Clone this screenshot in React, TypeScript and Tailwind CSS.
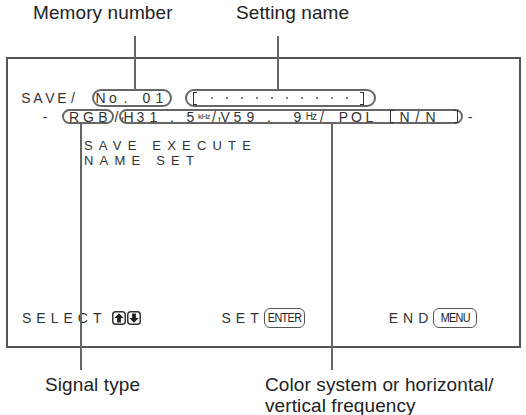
import React from 'react';

const Cell = ({ w, children }: { w: string; children?: React.ReactNode }) => (
    <span className={`${w} flex justify-center shrink-0`}>{children}</span>
);

const Gap = ({ w }: { w: string }) => <span className={`${w} shrink-0`} />;

const LBr = () => <span className="w-[4px] h-[13px] shrink-0 border-l border-y border-[#333]" />;
const RBr = () => <span className="w-[4px] h-[13px] shrink-0 border-r border-y border-[#333]" />;

const Dot = () => <span className="w-[2px] h-[2px] rounded-full bg-[#555]" />;

const ArrowKey = ({ down = false }: { down?: boolean }) => (
    <svg width="14" height="14" viewBox="0 0 14 14" className={down ? 'rotate-180' : ''}>
        <rect x="0.75" y="0.75" width="12.5" height="12.5" rx="3" fill="#fff" stroke="#333" strokeWidth="1.5" />
        <path d="M7 2.3 L11.6 7 H8.9 V11.6 H5.1 V7 H2.4 Z" fill="#222" />
    </svg>
);

const Key = ({ label, w }: { label: string; w: string }) => (
    <span className={`${w} h-[20px] shrink-0 flex items-center justify-center rounded-[6px] border border-[#555] tracking-normal`}>
        <span className="text-[12px] tracking-[-0.7px] scale-x-90 text-[#222]">{label}</span>
    </span>
);

const Pill = ({ className, children }: { className: string; children: React.ReactNode }) => (
    <div className={`${className} flex items-center shrink-0 rounded-full border-2 border-[#666]`}>{children}</div>
);

export default function App() {
    const dots = Array.from({ length: 10 });

    return (
        <div className="relative w-[526px] h-[415px] bg-white overflow-hidden font-['Liberation_Sans',Arial,sans-serif] text-[#2a2a2a]">
            {/* callout labels above */}
            <div className="h-[57px] flex pt-[2px] pl-[33px] text-[19px] leading-[21px] tracking-[0.1px] text-[#222]">
                <span className="w-[203px]">Memory number</span>
                <span>Setting name</span>
            </div>

            {/* monitor screen */}
            <div className="ml-[6px] w-[515px] h-[291px] border-2 border-[#555] flex flex-col pt-[30px] pb-[18px] text-[14px] text-[#333]">
                {/* row 1 */}
                <div className="h-[18px] flex items-center pl-[12px] leading-none">
                    <Cell w="w-[12px]">S</Cell>
                    <Cell w="w-[12px]">A</Cell>
                    <Cell w="w-[12px]">V</Cell>
                    <Cell w="w-[12px]">E</Cell>
                    <Cell w="w-[10px]">/</Cell>
                    <Gap w="w-[14px]" />
                    <Pill className="w-[80px] h-[18px]">
                        <Cell w="w-[13px]">N</Cell>
                        <Cell w="w-[12px]">o</Cell>
                        <Cell w="w-[13px]">.</Cell>
                        <Gap w="w-[8px]" />
                        <Cell w="w-[13px]">0</Cell>
                        <Cell w="w-[13px]">1</Cell>
                    </Pill>
                    <Gap w="w-[13px]" />
                    <Pill className="w-[191px] h-[18px]">
                        <Gap w="w-[6px]" />
                        <LBr />
                        <Gap w="w-[7px]" />
                        {dots.map((_, i) => (
                            <Cell key={i} w="w-[15px]">
                                <Dot />
                            </Cell>
                        ))}
                        <Gap w="w-[6px]" />
                        <RBr />
                    </Pill>
                </div>

                {/* row 2 */}
                <div className="mt-[2px] h-[15px] flex items-center pl-[34px] leading-none">
                    <Cell w="w-[6px]">-</Cell>
                    <Gap w="w-[14px]" />
                    <Pill className="w-[52px] h-[15px] pl-[3px]">
                        <Cell w="w-[14px]">R</Cell>
                        <Cell w="w-[15px]">G</Cell>
                        <Cell w="w-[14px]">B</Cell>
                    </Pill>
                    <Cell w="w-[5px]">/</Cell>
                    <Pill className="w-[344px] h-[15px]">
                        <Cell w="w-[13px]">
                            <span className="flex items-baseline">
                                <span className="text-[8px]">f</span>H
                            </span>
                        </Cell>
                        <Cell w="w-[13px]">3</Cell>
                        <Cell w="w-[13px]">1</Cell>
                        <Cell w="w-[24px]">.</Cell>
                        <Cell w="w-[13px]">5</Cell>
                        <Cell w="w-[14px]">
                            <span className="text-[8px] tracking-[-0.6px]">kHz</span>
                        </Cell>
                        <Cell w="w-[6px]">/</Cell>
                        <Cell w="w-[14px]">
                            <span className="flex items-baseline">
                                <span className="text-[8px]">f</span>V
                            </span>
                        </Cell>
                        <Cell w="w-[13px]">5</Cell>
                        <Cell w="w-[13px]">9</Cell>
                        <Cell w="w-[24px]">.</Cell>
                        <Gap w="w-[10px]" />
                        <Cell w="w-[13px]">9</Cell>
                        <Cell w="w-[14px]">
                            <span className="text-[10px] tracking-[-0.8px]">Hz</span>
                        </Cell>
                        <Cell w="w-[8px]">/</Cell>
                        <Gap w="w-[11px]" />
                        <Cell w="w-[13px]">P</Cell>
                        <Cell w="w-[13px]">O</Cell>
                        <Cell w="w-[13px]">L</Cell>
                        <Gap w="w-[14px]" />
                        <LBr />
                        <Gap w="w-[4px]" />
                        <Cell w="w-[13px]">N</Cell>
                        <Cell w="w-[13px]">/</Cell>
                        <Cell w="w-[13px]">N</Cell>
                        <Gap w="w-[17px]" />
                        <RBr />
                    </Pill>
                    <Gap w="w-[4px]" />
                    <Cell w="w-[6px]">-</Cell>
                </div>

                {/* menu items */}
                <div className="mt-[14px] pl-[76px] text-[13px] leading-[15px] tracking-[6.2px]">
                    <div>SAVE EXECUTE</div>
                    <div>NAME SET</div>
                </div>

                <div className="flex-1" />

                {/* key guide */}
                <div className="h-[20px] flex items-center pl-[14px] text-[14px] tracking-[5px] leading-none">
                    <span>SELECT</span>
                    <span className="flex gap-[1px] ml-[6px]">
                        <ArrowKey />
                        <ArrowKey down />
                    </span>
                    <span className="ml-[80px]">SET</span>
                    <Key label="ENTER" w="w-[41px]" />
                    <span className="ml-[84px]">END</span>
                    <Key label="MENU" w="w-[44px]" />
                </div>
            </div>

            {/* callout labels below */}
            <div className="mt-[26px] flex text-[19px] leading-[21px] tracking-[0.1px] text-[#222]">
                <span className="ml-[45px] w-[220px]">Signal type</span>
                <span>
                    Color system or horizontal/
                    <br />
                    vertical frequency
                </span>
            </div>

            {/* leader lines */}
            <div className="absolute left-[134px] top-[36px] w-[2px] h-[54px] bg-[#666]" />
            <div className="absolute left-[277px] top-[36px] w-[2px] h-[53px] bg-[#666]" />
            <div className="absolute left-[80px] top-[123px] w-[2px] h-[247px] bg-[#666]" />
            <div className="absolute left-[331px] top-[123px] w-[2px] h-[247px] bg-[#666]" />
        </div>
    );
}
